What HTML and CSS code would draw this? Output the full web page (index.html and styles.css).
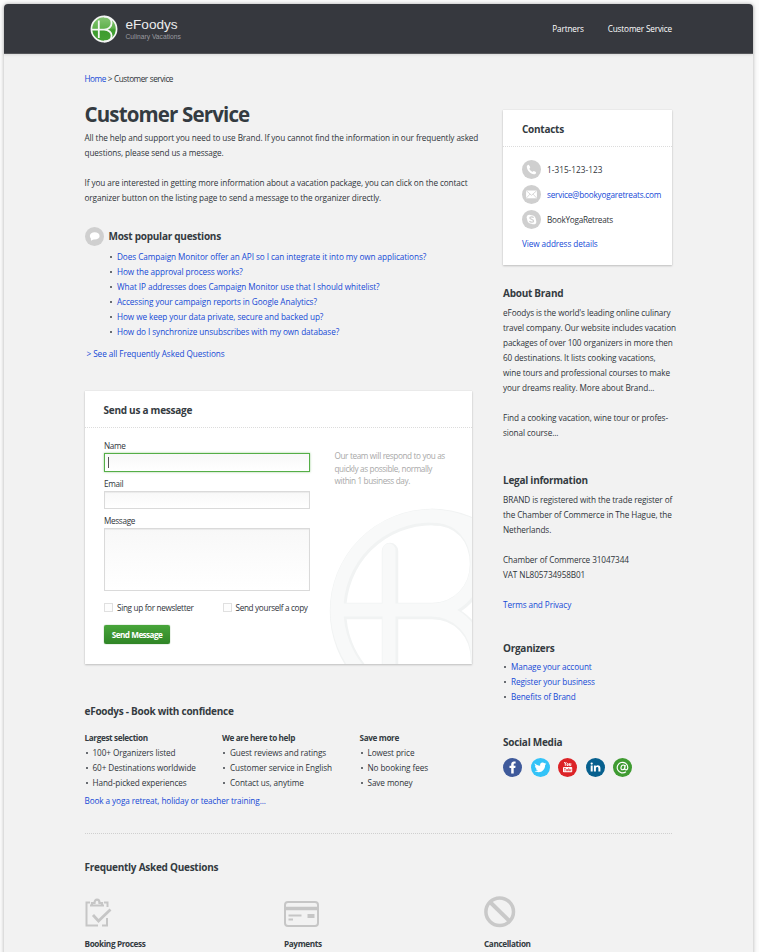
FILE: index.html
```html
<!DOCTYPE html>
<html lang="en">
<head>
<meta charset="utf-8">
<title>eFoodys - Customer Service</title>
<link rel="stylesheet" href="styles.css">
</head>
<body>
<div class="page">
  <header class="header">
    <a class="brand">
      <svg class="brand-mark" width="28" height="28" viewBox="0 0 28 28">
        <defs>
          <linearGradient id="leaf" x1="0" y1="0" x2="0" y2="1">
            <stop offset="0" stop-color="#86c574"/><stop offset=".46" stop-color="#62b24e"/>
            <stop offset=".54" stop-color="#3d9b2e"/><stop offset="1" stop-color="#46a235"/>
          </linearGradient>
        </defs>
        <circle cx="14" cy="14" r="12.6" fill="url(#leaf)" stroke="#f4f6f4" stroke-width="1.7"/>
        <path d="M8.800 5.600V23M1.500 14.600H15M14 1.600c5 0 7.600 3 7.600 6.400s-2.800 6.600-7.600 6.600c4.800 0 7.600 3 7.600 6.100s-2.800 5.600-7.600 5.800" fill="none" stroke="#f4f6f4" stroke-width="1.800"/>
      </svg>
      <span class="brand-text">
        <span class="brand-name">eFoodys</span>
        <span class="brand-sub">Culinary Vacations</span>
      </span>
    </a>
    <nav class="nav"><a>Partners</a><a>Customer Service</a></nav>
  </header>

  <nav class="crumbs"><a class="link">Home</a> &gt; Customer service</nav>

  <div class="columns">
    <main class="main">
      <h1>Customer Service</h1>
      <p>All the help and support you need to use Brand. If you cannot find the information in our frequently asked<br>questions, please send us a message.</p>
      <p>If you are interested in getting more information about a vacation package, you can click on the contact<br>organizer button on the listing page to send a message to the organizer directly.</p>

      <section class="popular">
        <div class="popular-head">
          <svg width="19" height="19" viewBox="0 0 19 19"><circle cx="9.500" cy="9.500" r="9.500" fill="#cfcfcf"/><ellipse cx="9.700" cy="8.900" rx="4.900" ry="3.700" fill="#fff"/><path d="M5.800 10.500L6 13.800l3.200-1.800z" fill="#fff"/></svg>
          <h2>Most popular questions</h2>
        </div>
        <ul class="list questions">
          <li><a class="link">Does Campaign Monitor offer an API so I can integrate it into my own applications?</a></li>
          <li><a class="link">How the approval process works?</a></li>
          <li><a class="link">What IP addresses does Campaign Monitor use that I should whitelist?</a></li>
          <li><a class="link">Accessing your campaign reports in Google Analytics?</a></li>
          <li><a class="link">How we keep your data private, secure and backed up?</a></li>
          <li><a class="link">How do I synchronize unsubscribes with my own database?</a></li>
        </ul>
        <a class="link see-all">&gt; See all Frequently Asked Questions</a>
      </section>

      <section class="card message">
        <svg class="watermark" width="145" height="160" viewBox="0 0 145 160">
          <g fill="none" stroke-linecap="round">
            <g stroke="#f1f3f3" stroke-width="16.500">
              <circle cx="105" cy="107" r="94"/>
              <path d="M63 47V170M12 107H108M105 13C135 13 151 34 151 60S132 107 105 107C132 107 152 128 152 156"/>
            </g>
            <g stroke="#f8f9f9" stroke-width="13" transform="translate(-1 -1)">
              <circle cx="105" cy="107" r="94"/>
              <path d="M63 47V170M12 107H108M105 13C135 13 151 34 151 60S132 107 105 107C132 107 152 128 152 156"/>
            </g>
          </g>
        </svg>
        <h2 class="card-title">Send us a message</h2>
        <div class="message-body">
          <form class="form">
            <label>Name</label>
            <div class="field focus"><i class="caret"></i></div>
            <label>Email</label>
            <div class="field"></div>
            <label>Message</label>
            <div class="field area"></div>
            <div class="checks">
              <span class="check"><i class="box"></i>Sing up for newsletter</span>
              <span class="check"><i class="box"></i>Send yourself a copy</span>
            </div>
            <a class="button">Send Message</a>
          </form>
          <p class="note">Our team will respond to you as<br>quickly as possible, normally<br>within 1 business day.</p>
        </div>
      </section>

      <section class="confidence">
        <h2>eFoodys - Book with confidence</h2>
        <div class="benefits">
          <div><h3>Largest selection</h3><ul class="list"><li>100+ Organizers listed</li><li>60+ Destinations worldwide</li><li>Hand-picked experiences</li></ul></div>
          <div><h3>We are here to help</h3><ul class="list"><li>Guest reviews and ratings</li><li>Customer service in English</li><li>Contact us, anytime</li></ul></div>
          <div><h3>Save more</h3><ul class="list"><li>Lowest price</li><li>No booking fees</li><li>Save money</li></ul></div>
        </div>
        <a class="link book">Book a yoga retreat, holiday or teacher training...</a>
      </section>
    </main>

    <aside class="side">
      <section class="card contacts">
        <h2 class="card-title">Contacts</h2>
        <div class="contact-rows">
          <div class="contact">
            <svg width="19" height="19" viewBox="0 0 19 19"><circle cx="9.500" cy="9.500" r="9.500" fill="#cfcfcf"/><path d="M6.800 4.900c-.9-.4-2 .8-2 1.900.2 3.600 3.600 7.200 7.200 7.500 1.200 0 2.400-1 2.100-1.800-.2-.5-1.900-1.600-2.500-1.500-.5.100-.7.900-1.200.8-1.300-.4-2.700-1.900-3-3.100-.1-.5.800-.8.800-1.300C8.200 6.700 7.200 5.100 6.800 4.900z" fill="#fff"/></svg>
            <span class="phone">1-315-123-123</span>
          </div>
          <div class="contact">
            <svg width="19" height="19" viewBox="0 0 19 19"><circle cx="9.500" cy="9.500" r="9.500" fill="#cfcfcf"/><rect x="4.100" y="5.500" width="10.800" height="7.800" fill="#fff"/><path d="M4.300 5.700l5.200 4.600 5.200-4.600M4.300 13.100l3.700-4M14.700 13.100l-3.700-4" fill="none" stroke="#cfcfcf" stroke-width=".8"/></svg>
            <a class="link mail">service@bookyogaretreats.com</a>
          </div>
          <div class="contact">
            <svg width="19" height="19" viewBox="0 0 19 19"><circle cx="9.500" cy="9.500" r="9.500" fill="#cfcfcf"/><circle cx="9.500" cy="9.500" r="4.300" fill="#fff"/><circle cx="7.300" cy="7.300" r="2.600" fill="#fff"/><circle cx="11.700" cy="11.700" r="2.600" fill="#fff"/><path d="M11.500 7.900c-.4-1.300-3.700-1.300-3.700.2s3.800 1.100 3.800 2.800-3.500 1.600-4.100.1" fill="none" stroke="#cfcfcf" stroke-width="1.200"/></svg>
            <span class="skype">BookYogaRetreats</span>
          </div>
          <a class="link address">View address details</a>
        </div>
      </section>

      <section class="about">
        <h2>About Brand</h2>
        <p>eFoodys is the world's leading online culinary<br>travel company. Our website includes vacation<br>packages of over 100 organizers in more then<br>60 destinations. It lists cooking vacations,<br>wine tours and professional courses to make<br>your dreams reality. More about Brand...</p>
        <p>Find a cooking vacation, wine tour or profes-<br>sional course...</p>
      </section>

      <section class="legal">
        <h2>Legal information</h2>
        <p>BRAND is registered with the trade register of<br>the Chamber of Commerce in The Hague, the<br>Netherlands.</p>
        <p>Chamber of Commerce 31047344<br>VAT NL805734958B01</p>
        <p><a class="link">Terms and Privacy</a></p>
      </section>

      <section class="organizers">
        <h2>Organizers</h2>
        <ul class="list">
          <li><a class="link">Manage your account</a></li>
          <li><a class="link">Register your business</a></li>
          <li><a class="link">Benefits of Brand</a></li>
        </ul>
      </section>

      <section class="social">
        <h2>Social Media</h2>
        <div class="social-row">
          <svg width="19" height="19" viewBox="0 0 19 19"><circle cx="9.500" cy="9.500" r="9.500" fill="#3f5a9b"/><path d="M8.200 15.500V10H6.500V7.800h1.700V6.300c0-2 1.100-2.900 2.700-2.900h1.700v2.200h-1.100c-.6 0-.8.3-.8.900v1.300h1.900L12.300 10h-1.600v5.500z" fill="#fff"/></svg>
          <svg width="19" height="19" viewBox="0 0 19 19"><circle cx="9.500" cy="9.500" r="9.500" fill="#33c3f8"/><path d="M3.600 5.300c1.500 1.600 3.300 2.300 5.500 2.400-.3-2 .9-3.200 2.500-3.200.8 0 1.400.3 1.900.8l1.500-.6-.9 1.300 1.300-.2-1.300 1.300c.2 4-2.800 7.200-6.500 7.200-1.500 0-2.900-.4-3.900-1.200 1.300 0 2.500-.3 3.300-1-1.100-.1-1.900-.8-2.200-1.700h1c-1.200-.4-1.800-1.300-1.900-2.400l1 .2c-1-.8-1.300-1.900-1.300-2.900z" fill="#fff"/></svg>
          <svg width="19" height="19" viewBox="0 0 19 19"><circle cx="9.500" cy="9.500" r="9.500" fill="#dc2327"/><path d="M6.300 4l1 1.900L8.300 4M7.300 5.900v2M9 5.700h1.200v1.800H9zM11.500 5.200v2.400h1.300V5.200" fill="none" stroke="#fff" stroke-width=".9"/><rect x="5" y="9" width="9.200" height="5.300" rx=".8" fill="#fff"/><path d="M6 10.400h1.800M6.900 10.400v3M8.600 11v2h.9v-2M10.700 10v3h.8v-1.600h-.8M13.400 13h-.8v-1.700h.9" fill="none" stroke="#dc2327" stroke-width=".6"/></svg>
          <svg width="19" height="19" viewBox="0 0 19 19"><circle cx="9.500" cy="9.500" r="9.500" fill="#07608e"/><circle cx="5.700" cy="5.600" r="1.150" fill="#fff"/><path d="M4.700 7.500h2v6h-2zM7.900 7.500h1.900v.8c.5-.7 1.100-1 2-1 1.800 0 2.600 1.100 2.600 2.900v3.300h-2v-3c0-.9-.3-1.500-1.100-1.500-.9 0-1.400.6-1.400 1.500v3h-2z" fill="#fff"/></svg>
          <svg width="19" height="19" viewBox="0 0 19 19"><circle cx="9.500" cy="9.500" r="9.500" fill="#3f9b31"/><path d="M12.900 13.700A5.300 5.300 0 1 1 14.800 9.300c0 1.500-.7 2.500-1.700 2.500s-1.500-.6-1.300-1.600l.5-3.200M11.800 9.300c-.3 1.500-1.200 2.400-2.200 2.400-1.200 0-1.800-.9-1.600-2.200.2-1.500 1.100-2.500 2.300-2.500 1.100 0 1.700.9 1.500 2.300z" fill="none" stroke="#fff" stroke-width="1.150"/></svg>
        </div>
      </section>
    </aside>
  </div>

  <section class="faq">
    <h2>Frequently Asked Questions</h2>
    <div class="topics">
      <div class="topic">
        <svg width="34" height="32" viewBox="0 0 34 32"><g fill="none" stroke="#c6c6c6" stroke-width="2"><path d="M5 6.500H1.500V29.500H13M17 29.500H22V22M19 6.500H22.500V11"/><path d="M5 9.500h14M7 9V7h2.500c0-4.500 5-4.500 5 0H17V9" stroke-width="2.200"/><path d="M8 19l5.500 6L25.500 13.500" stroke-width="2.800"/></g></svg>
        <h3>Booking Process</h3>
      </div>
      <div class="topic">
        <svg width="36" height="32" viewBox="0 0 36 32"><rect x="1" y="6" width="33" height="24" rx="3" fill="none" stroke="#c6c6c6" stroke-width="2"/><path d="M1 12.500h33" stroke="#c6c6c6" stroke-width="3.500"/><path d="M4.500 19.500h13M4.500 23.500h4.500" stroke="#c6c6c6" stroke-width="2"/><path d="M23.500 20h7" stroke="#c6c6c6" stroke-width="4"/></svg>
        <h3>Payments</h3>
      </div>
      <div class="topic">
        <svg width="32" height="32" viewBox="0 0 32 32"><circle cx="15.700" cy="15.700" r="13.800" fill="none" stroke="#c9c9c9" stroke-width="3.500"/><path d="M6 6l20 19.500" stroke="#c9c9c9" stroke-width="4"/></svg>
        <h3>Cancellation</h3>
      </div>
    </div>
  </section>
</div>
</body>
</html>
```
FILE: styles.css
```css
* { box-sizing: border-box; margin: 0; padding: 0; }

html { height: 100%; overflow: hidden; background: #fcfcfc; }

body {
  height: 952px;
  overflow: hidden;
  padding: 4px 6px 0 4px;
  font: 8.200px/15px "Open Sans", "Noto Sans", sans-serif;
  letter-spacing: -.095px;
  color: #2f343a;
  white-space: nowrap;
}

svg { display: block; flex: none; }
ul { list-style: none; }
.link { color: #1549d6; }

.page {
  height: 960px;
  border-radius: 4px 4px 0 0;
  background: #f2f2f2;
  box-shadow: 0 0 4px rgba(0, 0, 0, .3);
}

.header {
  display: flex;
  align-items: center;
  height: 50px;
  padding: 0 81px 0 86px;
  border-bottom: 1px solid #55565a;
  border-radius: 4px 4px 0 0;
  background: #36383e;
  box-shadow: 0 1px 3px rgba(0, 0, 0, .1);
}
.brand { display: flex; align-items: center; gap: 7.500px; letter-spacing: 0; }
.brand-text { display: flex; flex-direction: column; padding-top: 1px; font-family: "Liberation Sans", Arial, sans-serif; }
.brand-name { font-size: 13.600px; line-height: 14px; color: #eceded; }
.brand-sub { font-size: 6.700px; line-height: 9px; color: #9b9ca0; }
.nav { display: flex; gap: 24px; margin-left: auto; color: #fff; letter-spacing: -.15px; }

.crumbs { height: 47px; padding: 17px 0 0 80.500px; letter-spacing: -.46px; word-spacing: .3px; }

.columns { display: flex; gap: 31px; padding-left: 80.500px; }
.main { width: 387.500px; height: 732px; }
.side { width: 170px; padding-top: 9px; }

h1 {
  height: 29px;
  font-size: 20.500px;
  line-height: 27px;
  letter-spacing: -.85px;
  font-weight: 700;
  color: #343b41;
}
h2 { font-size: 10px; line-height: 20px; letter-spacing: -.26px; font-weight: 700; color: #343b41; }
h3 { font-size: 8.200px; line-height: 15px; letter-spacing: -.37px; font-weight: 700; color: #343b41; }
p + p { margin-top: 15px; }

.list li { padding-left: 8px; }
.list li::before { content: ""; float: left; width: 2px; height: 2px; margin: 7px 0 0 -7px; border-radius: 1px; background: #3b4147; }

.popular { margin-top: 21px; }
.popular-head { display: flex; align-items: center; gap: 5px; height: 20px; }
.questions { margin: 2.500px 0 7px 24.500px; }
.questions { letter-spacing: -.07px; }
.see-all { display: block; padding-left: 2px; letter-spacing: -.06px; }

.card { position: relative; background: #fff; box-shadow: 0 1px 2px rgba(0, 0, 0, .2), 0 0 1px rgba(0, 0, 0, .12); }
.card-title { height: 37px; padding: 9px 19px 0; border-bottom: 1px dotted #dcdcdc; }

.message { height: 273px; margin-top: 30.500px; overflow: hidden; }
.watermark { position: absolute; right: 0; bottom: 0; }
.message-body { position: relative; display: flex; gap: 24.500px; padding: 11px 19px 0 19.500px; }
.form { width: 206px; }
.form label { display: block; height: 14px; line-height: 14px; letter-spacing: -.33px; }
.field {
  height: 18px;
  margin-bottom: 5px;
  border: 1px solid #dadada;
  background: linear-gradient(#f8f8f8, #fff);
  box-shadow: inset 0 1px 1px rgba(0, 0, 0, .06);
}
.field.focus { height: 19px; border-color: #55ae47; box-shadow: 0 0 2px rgba(85, 174, 71, .6); }
.caret { display: block; width: 1px; height: 11px; margin: 3px 0 0 3px; background: #555; }
.field.area { height: 63px; margin-bottom: 9px; }
.checks { display: flex; letter-spacing: -.33px; }
.check { display: flex; flex: none; align-items: center; gap: 4px; width: 118.500px; }
.box { width: 9px; height: 9px; border: 1px solid #e0e0e0; background: #fdfdfd; }
.button {
  display: block;
  width: 66px;
  height: 19px;
  margin-top: 10px;
  border-radius: 2px;
  background: linear-gradient(#48a53a, #2f8526);
  box-shadow: 0 0 1px #2b7a22;
  color: #fff;
  font-size: 8.200px;
  letter-spacing: -.6px;
  word-spacing: .4px;
  font-weight: 700;
  line-height: 19px;
  text-align: center;
}
.note { padding-top: 11px; letter-spacing: -.39px; word-spacing: .1px; line-height: 12.500px; color: #a8a8a8; }

.confidence { margin-top: 37px; }
.benefits { display: grid; grid-template-columns: 137.500px 137.500px 1fr; margin-top: 9px; }
.book { display: block; margin-top: 3px; }

.contacts { width: 169px; height: 155px; }
.contact-rows { padding: 13px 0 0 19px; }
.contact { display: flex; align-items: center; gap: 6px; height: 19px; margin-bottom: 6px; }
.phone { letter-spacing: .05px; }
.skype { letter-spacing: -.25px; }
.mail { letter-spacing: -.2px; }
.address { display: block; margin-top: 7px; }
.about { margin-top: 18px; }
.side section:not(.card) h2 { margin-bottom: 1.500px; }
.legal { margin-top: 30.500px; }
.organizers { margin-top: 26px; }
.social { margin-top: 28px; }
.social-row { display: flex; gap: 8.500px; margin-top: 6px; padding-left: .4px; }

.faq { width: 587px; margin-left: 80.500px; border-top: 1px dotted #cfcfcf; padding-top: 23px; }
.topics { display: grid; grid-template-columns: 199.500px 200px 1fr; margin-top: 19px; }
.topic h3 { margin-top: 8px; }
```
